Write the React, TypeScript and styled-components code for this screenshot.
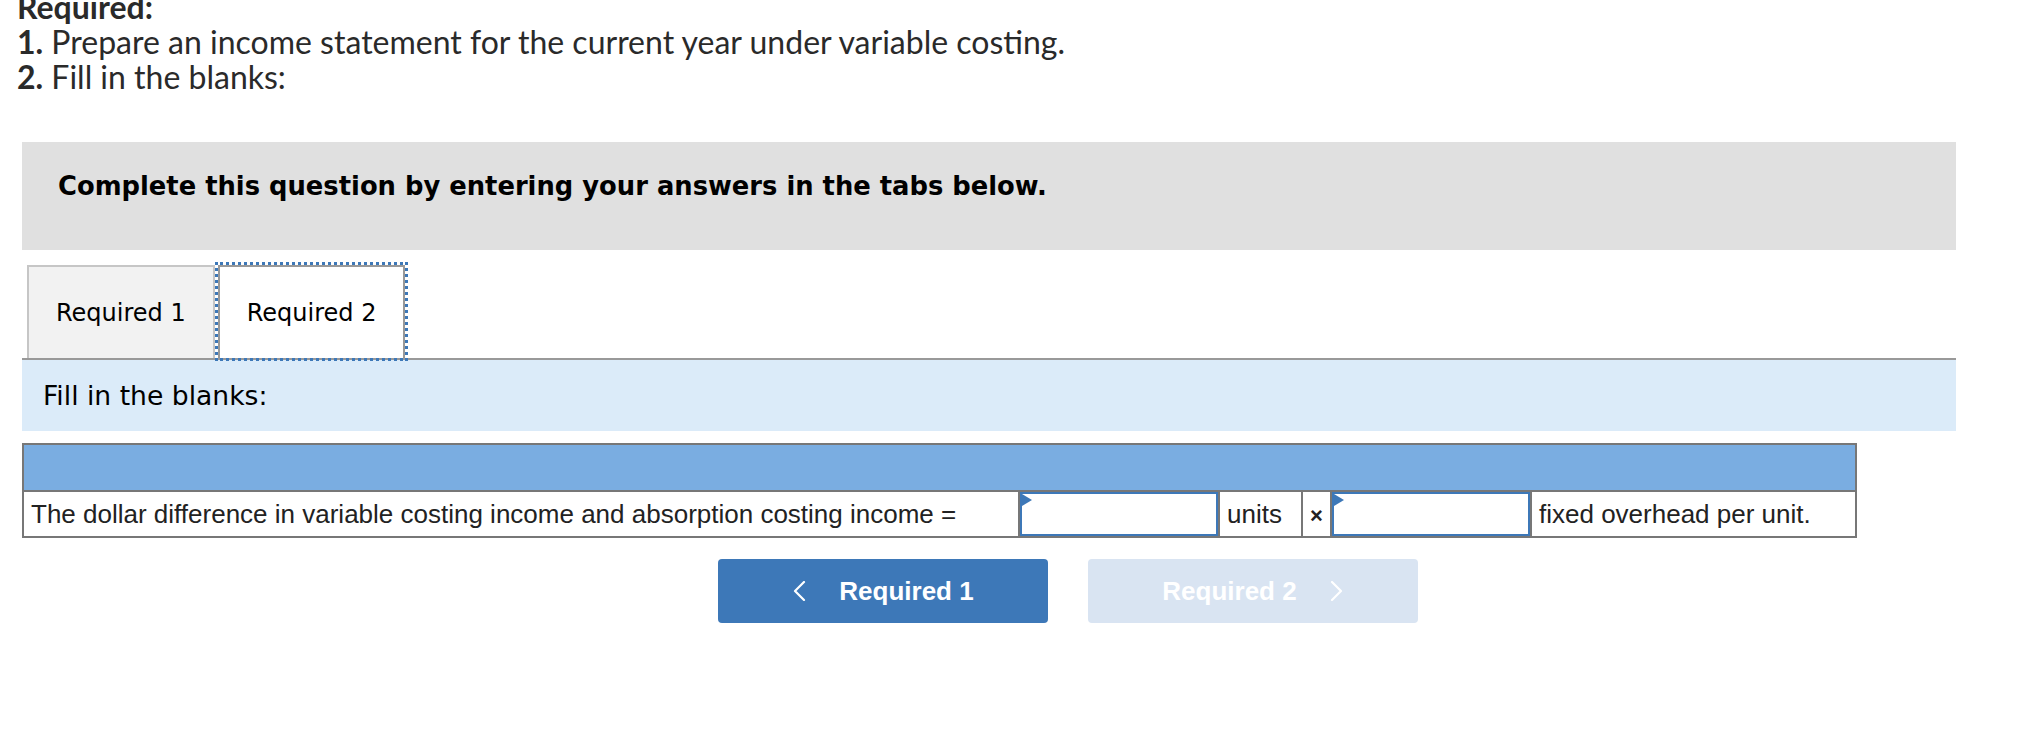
import React from 'react';
import styled, { createGlobalStyle } from 'styled-components';

const GlobalStyle = createGlobalStyle`
  html, body {
    margin: 0;
    padding: 0;
    background: #ffffff;
  }
  body {
    overflow: hidden;
  }
`;

const Page = styled.div`
  width: 2030px;
  box-sizing: border-box;
  padding: 0 74px 0 22px;
`;

const Instructions = styled.div`
  margin: -11px 0 0 -5px;
  font-family: Lato, 'Open Sans', sans-serif;
  font-size: 32px;
  line-height: 35px;
  color: #2a2a2a;
`;

const Line = styled.div``;

const Strong = styled.b`
  font-weight: 700;
`;

const Banner = styled.div`
  margin-top: 48px;
  height: 108px;
  box-sizing: border-box;
  padding: 26px 36px 0;
  background: #e0e0e0;
  font-family: 'DejaVu Sans', Verdana, sans-serif;
  font-weight: 700;
  font-size: 25.8px;
  line-height: 36px;
  color: #000;
`;

const TabStrip = styled.div`
  margin-top: 15px;
  padding-left: 5px;
  display: flex;
  align-items: flex-end;
  border-bottom: 2px solid #999;
`;

const Tab = styled.div<{ $active?: boolean }>`
  height: 93px;
  box-sizing: border-box;
  padding: 0 27px;
  margin-left: ${(p) => (p.$active ? '3px' : '0')};
  display: flex;
  align-items: center;
  justify-content: center;
  border: 2px solid ${(p) => (p.$active ? '#999' : '#c6c6c6')};
  border-bottom: none;
  background: ${(p) => (p.$active ? '#fff' : '#f2f2f2')};
  outline: ${(p) => (p.$active ? '3px dotted #3d78b8' : 'none')};
  outline-offset: 0;
  font-family: 'DejaVu Sans', Verdana, sans-serif;
  font-size: 24px;
  color: #000;
`;

const Prompt = styled.div`
  height: 71px;
  box-sizing: border-box;
  padding-left: 21px;
  display: flex;
  align-items: center;
  background: #dbebf9;
  font-family: 'DejaVu Sans', Verdana, sans-serif;
  font-size: 26.6px;
  color: #000;
`;

const Grid = styled.table`
  margin-top: 12px;
  width: 1833px;
  table-layout: fixed;
  border-collapse: collapse;
  border: 2px solid #777;
`;

const HeadCell = styled.td`
  height: 45px;
  padding: 0;
  background: #7aade1;
  border: 2px solid #777;
`;

const Cell = styled.td<{ $center?: boolean }>`
  height: 44px;
  padding: 0 ${(p) => (p.$center ? '0' : '7px')};
  border: 2px solid #777;
  text-align: ${(p) => (p.$center ? 'center' : 'left')};
  font-family: 'Liberation Sans', Arial, sans-serif;
  font-size: 26px;
  color: #222;
  white-space: nowrap;
  overflow: hidden;
`;

const InputCell = styled.td`
  position: relative;
  height: 44px;
  padding: 0;
  border: 2px solid #777;
`;

const Field = styled.input`
  display: block;
  width: 100%;
  height: 44px;
  box-sizing: border-box;
  margin: 0;
  border: 2px solid #3d78b8;
  background: #fff;
  outline: none;
`;

const Marker = styled.span`
  position: absolute;
  top: 2px;
  left: 2px;
  width: 0;
  height: 0;
  border-left: 10px solid #3d78b8;
  border-top: 6px solid transparent;
  border-bottom: 6px solid transparent;
`;

const Times = styled.span`
  font-size: 22px;
  font-weight: 700;
`;

const NavRow = styled.div`
  margin-top: 21px;
  padding-left: 696px;
  display: flex;
  gap: 40px;
`;

const NavButton = styled.button<{ $disabled?: boolean }>`
  width: 330px;
  height: 64px;
  border: none;
  border-radius: 4px;
  display: flex;
  align-items: center;
  justify-content: center;
  gap: 33px;
  background: ${(p) => (p.$disabled ? '#d9e4f2' : '#3d78b8')};
  color: #fff;
  font-family: 'Liberation Sans', Arial, sans-serif;
  font-weight: 700;
  font-size: 26px;
  cursor: ${(p) => (p.$disabled ? 'default' : 'pointer')};
`;

const Chevron: React.FC<{ dir: 'left' | 'right' }> = ({ dir }) => (
  <svg width="14" height="20" viewBox="0 0 14 20" fill="none">
    <polyline
      points={dir === 'left' ? '12,1 3,10 12,19' : '2,1 11,10 2,19'}
      stroke="#fff"
      strokeWidth="2.2"
      strokeLinecap="round"
      strokeLinejoin="round"
    />
  </svg>
);

const App: React.FC = () => {
  return (
    <Page>
      <GlobalStyle />
      <Instructions>
        <Line>
          <Strong>Required:</Strong>
        </Line>
        <Line>
          <Strong>1.</Strong> Prepare an income statement for the current year under variable costing.
        </Line>
        <Line>
          <Strong>2.</Strong> Fill in the blanks:
        </Line>
      </Instructions>

      <Banner>Complete this question by entering your answers in the tabs below.</Banner>

      <TabStrip>
        <Tab>Required 1</Tab>
        <Tab $active>Required 2</Tab>
      </TabStrip>

      <Prompt>Fill in the blanks:</Prompt>

      <Grid>
        <colgroup>
          <col style={{ width: 996 }} />
          <col style={{ width: 200 }} />
          <col style={{ width: 83 }} />
          <col style={{ width: 29 }} />
          <col style={{ width: 200 }} />
          <col style={{ width: 325 }} />
        </colgroup>
        <tbody>
          <tr>
            <HeadCell colSpan={6} />
          </tr>
          <tr>
            <Cell>The dollar difference in variable costing income and absorption costing income =</Cell>
            <InputCell>
              <Field type="text" />
              <Marker />
            </InputCell>
            <Cell>units</Cell>
            <Cell $center>
              <Times>×</Times>
            </Cell>
            <InputCell>
              <Field type="text" />
              <Marker />
            </InputCell>
            <Cell>fixed overhead per unit.</Cell>
          </tr>
        </tbody>
      </Grid>

      <NavRow>
        <NavButton>
          <Chevron dir="left" />
          <span>Required 1</span>
        </NavButton>
        <NavButton $disabled disabled>
          <span>Required 2</span>
          <Chevron dir="right" />
        </NavButton>
      </NavRow>
    </Page>
  );
};

export default App;
